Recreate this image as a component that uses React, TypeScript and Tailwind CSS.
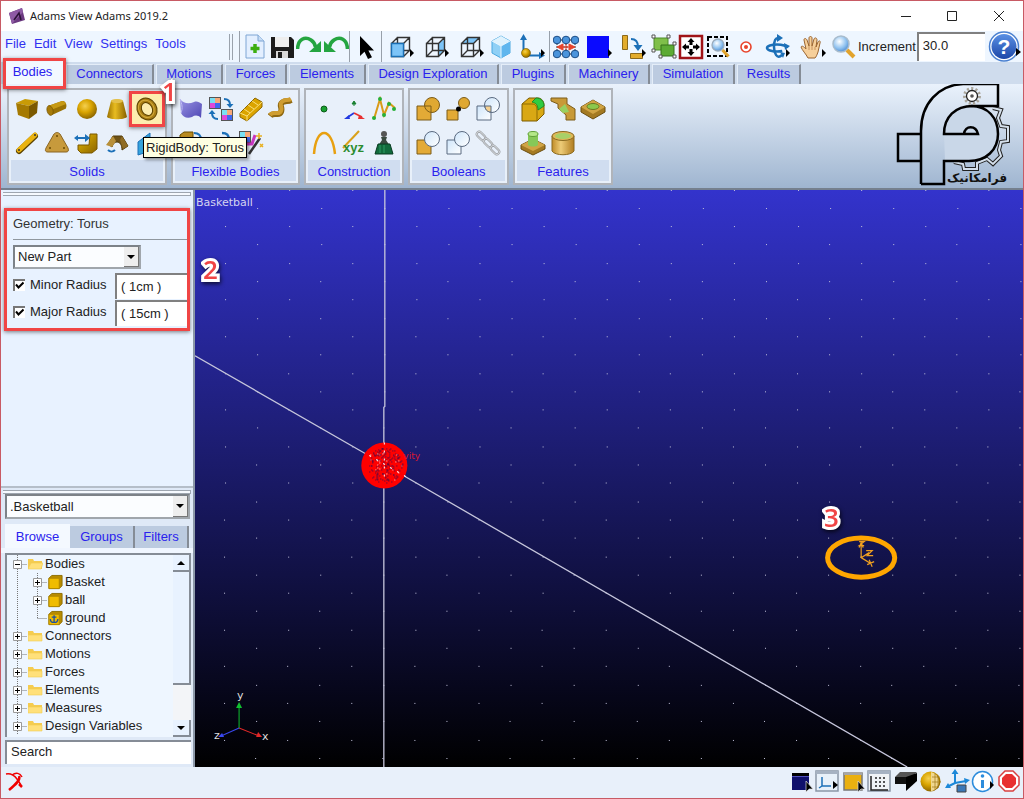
import React from "react";
import type { ReactNode } from "react";

type IconProps = { children: ReactNode; size?: number };

function Icon({ children, size = 26 }: IconProps) {
  return (
    <svg width={size} height={size} viewBox="0 0 26 26" fill="none" aria-hidden="true" className="shrink-0">
      {children}
    </svg>
  );
}

function Gradients() {
  return (
    <svg width="0" height="0" className="absolute" aria-hidden="true">
      <defs>
        <linearGradient id="gold" x1="0" y1="0" x2="1" y2="1">
          <stop offset="0" stopColor="#e6b800" />
          <stop offset="1" stopColor="#8a6400" />
        </linearGradient>
        <linearGradient id="goldH" x1="0" y1="0" x2="1" y2="0">
          <stop offset="0" stopColor="#9a7000" />
          <stop offset="0.4" stopColor="#e8bc20" />
          <stop offset="1" stopColor="#8a6200" />
        </linearGradient>
        <radialGradient id="goldBall" cx="0.4" cy="0.35" r="0.65">
          <stop offset="0" stopColor="#f5d050" />
          <stop offset="0.5" stopColor="#d9a400" />
          <stop offset="1" stopColor="#8f6800" />
        </radialGradient>
        <linearGradient id="tan" x1="0" y1="0" x2="1" y2="0">
          <stop offset="0" stopColor="#c08c28" />
          <stop offset="0.4" stopColor="#edcc78" />
          <stop offset="1" stopColor="#b07c20" />
        </linearGradient>
        <linearGradient id="purple" x1="0" y1="0" x2="1" y2="1">
          <stop offset="0" stopColor="#9a94e4" />
          <stop offset="1" stopColor="#5048b4" />
        </linearGradient>
        <linearGradient id="glass" x1="0" y1="0" x2="1" y2="1">
          <stop offset="0" stopColor="#cfe6fb" />
          <stop offset="1" stopColor="#ffffff" />
        </linearGradient>
        <linearGradient id="help" x1="0" y1="0" x2="0" y2="1">
          <stop offset="0" stopColor="#5a90e4" />
          <stop offset="1" stopColor="#1c47a8" />
        </linearGradient>
        <radialGradient id="lens" cx="0.4" cy="0.35" r="0.7">
          <stop offset="0" stopColor="#ffffff" />
          <stop offset="0.6" stopColor="#8fc2f0" />
          <stop offset="1" stopColor="#4a86cc" />
        </radialGradient>
      </defs>
    </svg>
  );
}

const corner = <path d="M22 15l4 4-4 4z" fill="#000" />;

const wireCube = (
  <g stroke="#333" strokeWidth="1.4">
    <path d="M3.500 9.500h12v13h-12zM9.500 3.500h12v13h-12zM3.500 9.500l6-6M15.500 9.500l6-6M15.500 22.500l6-6M3.500 22.500l6-6" />
  </g>
);

const newIcon = (
  <Icon>
    <path d="M4 1h12l6 6v17H4z" fill="#e3efff" stroke="#7fa6d4" />
    <path d="M16 1v6h6" fill="#c6dcf5" stroke="#7fa6d4" />
    <path d="M13 10v9M8.500 14.500h9" stroke="#3cae10" strokeWidth="3.500" />
  </Icon>
);
const saveIcon = (
  <Icon>
    <path d="M2 3h20l3 3v18H2z" fill="#1c1c1c" />
    <path d="M6 3h14v10H6z" fill="#eee" />
    <path d="M7 17h12v7H7z" fill="#d8d8d8" />
    <path d="M9 18h4v6H9z" fill="#1c1c1c" />
  </Icon>
);
const redoIcon = (
  <Icon>
    <path d="M1.500 15C2 5 9 2 15 6c3 2 4 4 4.500 7" stroke="#24a541" strokeWidth="3.600" />
    <path d="M25 7v11H13z" fill="#24a541" />
  </Icon>
);
const undoIcon = (
  <Icon>
    <path d="M24.500 15C24 5 17 2 11 6c-3 2-4 4-4.500 7" stroke="#24a541" strokeWidth="3.600" />
    <path d="M1 7v11h12z" fill="#24a541" />
  </Icon>
);
const pointerIcon = (
  <Icon>
    <path d="M7 2v20l4.500-4.200L15 25l4-1.800-3.600-6.700H21z" fill="#000" />
  </Icon>
);
const frontIcon = (
  <Icon>
    {wireCube}
    <path d="M3.500 9.500h12v13h-12z" fill="#7cc4f8" stroke="#1b6fb5" strokeWidth="1.400" />
    {corner}
  </Icon>
);
const rightIcon = (
  <Icon>
    <path d="M15.500 9.500l6-6v13l-6 6z" fill="#7cc4f8" stroke="#1b6fb5" />
    {wireCube}
    {corner}
  </Icon>
);
const topIcon = (
  <Icon>
    <path d="M3.500 9.500l6-6h12l-6 6z" fill="#7cc4f8" stroke="#1b6fb5" />
    {wireCube}
    {corner}
  </Icon>
);
const isoIcon = (
  <Icon>
    <path d="M13 2l9 5v12l-9 5-9-5V7z" fill="#8fd0f6" stroke="#4aa8e0" />
    <path d="M13 2l9 5-9 5-9-5z" fill="#dff2fd" />
    <path d="M13 12v12l9-5V7z" fill="#5fb6ee" />
    <path d="M4 7l9 5 9-5M13 12v12" stroke="#e8f6ff" />
  </Icon>
);
const axesIcon = (
  <Icon>
    <path d="M4.500 20V4M8 21.500h13" stroke="#1c70b8" strokeWidth="2" />
    <path d="M4.500 0L8 6H1zM20 18l6 3.500-6 3.500z" fill="#1c70b8" />
    <circle cx="7" cy="19" r="4.500" fill="url(#goldBall)" stroke="#6d5000" strokeWidth=".6" />
    {corner}
  </Icon>
);
const gridIcon = (
  <Icon>
    <path d="M4 6h18M4 20h18M4 6v14M22 6v14M13 6v14M4 13h18" stroke="#333" strokeDasharray="2 1" />
    <path d="M13 9v8M9 13h8M4 13l6-3v6zM22 13l-6-3v6z" fill="#e8442c" stroke="#e8442c" />
    {[4, 13, 22].map((x) => [6, 20].map((y) => <circle key={`${x}-${y}`} cx={x} cy={y} r="3.800" fill="#4a94dc" stroke="#1b4d86" />))}
  </Icon>
);
const blueIcon = (
  <Icon>
    <path d="M1 2h22v22H1z" fill="#0a0aff" />
    {corner}
  </Icon>
);
const rotateIcon = (
  <Icon>
    <path d="M2.500 1.500h5v14h-5zM10.500 19.500h12v5h-12z" fill="#e3ac2c" stroke="#8c691a" />
    <path d="M11 5c5 0 7 3 7 8" stroke="#1c70b8" strokeWidth="2" />
    <path d="M13.500 11h9L18 17z" fill="#1c70b8" />
    {corner}
  </Icon>
);
const groupIcon = (
  <Icon>
    <path d="M3 4h14v12H3z" fill="#7fbf4a" stroke="#4c8c28" />
    <path d="M10 11h13v11H10z" fill="#5cab35" stroke="#35721b" />
    {[[1, 1], [16, 1], [1, 15], [22, 8], [8, 21], [22, 21]].map(([x, y]) => (
      <path key={`${x}-${y}`} d={`M${x} ${y}h3v3h-3z`} fill="#fff" stroke="#555" />
    ))}
  </Icon>
);
const fitIcon = (
  <Icon>
    <path d="M2 2h22v22H2z" fill="#fff" stroke="#a01418" strokeWidth="2.500" />
    <path d="M13 4l3.500 4h-2v3h-3V8h-2zM13 22l3.500-4h-2v-3h-3v3h-2zM4 13l4-3.500v2h3v3H8v2zM22 13l-4-3.500v2h-3v3h3v2z" fill="#000" />
  </Icon>
);
const zoomBoxIcon = (
  <Icon>
    <path d="M3 3h19v19H3z" stroke="#000" strokeWidth="2" strokeDasharray="4 2" />
    <circle cx="13" cy="11" r="6" fill="url(#lens)" stroke="#9aabbc" strokeWidth="1.300" />
    <path d="M17.500 16l6 6.500" stroke="#e2a32c" strokeWidth="3.200" />
  </Icon>
);
const targetIcon = (
  <Icon>
    <circle cx="13" cy="13" r="5" stroke="#e8442c" strokeWidth="1.600" fill="#fff" />
    <circle cx="13" cy="13" r="2" fill="#e8442c" />
  </Icon>
);
const orbitIcon = (
  <Icon>
    <ellipse cx="13" cy="14" rx="10" ry="3.500" stroke="#1c70b8" strokeWidth="2.500" strokeDasharray="44 8" strokeDashoffset="-6" />
    <path d="M18 21c-5 5-8-2-8-8 0-5 1-9 4-9" stroke="#1c70b8" strokeWidth="2.500" />
    <path d="M13 0l6 4-6 4zM20 9l6 3-5 4zM16 18l5 1-2 5z" fill="#1c70b8" />
    {corner}
  </Icon>
);
const handIcon = (
  <Icon>
    <path
      d="M8 24c-2-4-6-8-7-11 1-2 3 0 5 2L4 6c0-2 2-2 3 0l2 6V4c0-2 3-2 3 0v8l2-7c1-2 3-1 3 1l-1 7 2-5c1-2 3-1 2 1l-2 9c-1 3-2 5-3 6z"
      fill="#f6cf9a"
      stroke="#9a6430"
    />
    <path d="M9 12v4M12 12v4M15 13v3" stroke="#c89460" />
    {corner}
  </Icon>
);
const magnifierIcon = (
  <Icon>
    <circle cx="10" cy="10" r="8" fill="url(#lens)" stroke="#a8bccd" strokeWidth="1.500" />
    <path d="M16 16l7 7" stroke="#e2a32c" strokeWidth="4" />
  </Icon>
);

/* Solids */
const boxIcon = (
  <Icon>
    <path d="M2 7l9-4 13 2-9 5z" fill="#c99b06" />
    <path d="M2 7l13 3v13L4 19z" fill="#a57a02" />
    <path d="M15 10l9-5-1 12-8 6z" fill="#7b5900" />
  </Icon>
);
const cylinderIcon = (
  <Icon>
    <path d="M4 10l14-5c4-1 6 6 3 8L8 19z" fill="#9a7204" />
    <path d="M4 10l14-5c2 0 3 1 4 3L7 14z" fill="#c79a14" />
    <ellipse cx="6" cy="14.500" rx="3" ry="5" fill="#a77b08" stroke="#705000" strokeWidth=".6" transform="rotate(-15 6 14.500)" />
  </Icon>
);
const sphereIcon = (
  <Icon>
    <circle cx="13" cy="13" r="10" fill="url(#goldBall)" />
  </Icon>
);
const frustumIcon = (
  <Icon>
    <path d="M7 5c2-2 10-2 12 0l4 16c-3 3-17 3-20 0z" fill="url(#goldH)" />
    <ellipse cx="13" cy="5" rx="6" ry="2" fill="#e4c04a" />
  </Icon>
);
const torusIcon = (
  <Icon>
    <g transform="rotate(-30 13 13)">
      <ellipse cx="13" cy="13" rx="7.500" ry="9" stroke="#5c4200" strokeWidth="5.500" />
      <ellipse cx="13" cy="13" rx="7.500" ry="9" stroke="#a87d14" strokeWidth="3.500" />
      <ellipse cx="12.500" cy="12.500" rx="7.500" ry="9" stroke="#d4ab3b" strokeWidth="1" />
    </g>
  </Icon>
);
const linkIcon = (
  <Icon>
    <path d="M5 21L21 6" stroke="#5c4300" strokeWidth="6" strokeLinecap="round" />
    <path d="M5 20L21 5" stroke="#eab310" strokeWidth="5" strokeLinecap="round" />
    <circle cx="5" cy="20" r="1" fill="#333" />
    <circle cx="21" cy="5" r="1" fill="#333" />
  </Icon>
);
const plateIcon = (
  <Icon>
    <path d="M10 4c2-2 4-2 6 0l8 14c1 3 0 4-2 4H4c-3 0-3-2-2-4z" fill="#c79a3c" stroke="#8a6420" />
    <circle cx="13" cy="6" r="1" fill="#6b4a00" />
    <circle cx="6" cy="18" r="1" fill="#6b4a00" />
    <circle cx="20" cy="18" r="1" fill="#6b4a00" />
  </Icon>
);
const extrudeIcon = (
  <Icon>
    <path d="M16 4h7v15l-5 4H7l-3-3v-5h11z" fill="url(#gold)" stroke="#7b5900" />
    <path d="M3 8h9" stroke="#1c70b8" strokeWidth="2" />
    <path d="M11 4l5 4-5 4zM4 5l-4 3 4 3z" fill="#1c70b8" />
  </Icon>
);
const revolveIcon = (
  <Icon>
    <path d="M4 14l5-8h9l6 10-6 4c0-5-2-8-5-8s-4 2-5 5z" fill="#6e5216" stroke="#503b0a" />
    <path d="M2 15l7-9 3 5-4 6z" fill="#b8903a" />
    <path d="M18 6l6 10-5 3-3-9z" fill="#8f6c24" />
    <path d="M4 20c2 2 5 2 7 0" stroke="#1c70b8" strokeWidth="2" />
  </Icon>
);
const planeIcon = (
  <Icon>
    <path d="M4 12L16 3v18L4 25z" fill="#35a3dc" stroke="#1c70b8" />
  </Icon>
);

/* Flexible bodies */
const flexIcon = (
  <Icon>
    <path d="M2 3c4 5 9 5 14 3 3-1 5 0 8 2l-1 14c-3-3-6-3-9-1-5 2-9 0-11-4z" fill="url(#purple)" />
    <path d="M2 3c2 5 3 9 1 14" stroke="#c0bcf4" />
  </Icon>
);
const mosaic = (x: number, y: number) => (
  <g>
    <path d={`M${x} ${y}h12v12h-12z`} fill="#555" />
    <path d={`M${x + 1} ${y + 1}h5v5h-5z`} fill="#78e0f4" />
    <path d={`M${x + 6} ${y + 1}h5v5h-5z`} fill="#f8a878" />
    <path d={`M${x + 1} ${y + 6}h5v5h-5z`} fill="#e048d8" />
    <path d={`M${x + 6} ${y + 6}h5v5h-5z`} fill="#4068f0" />
  </g>
);
const swapIcon = (
  <Icon>
    {mosaic(1, 1)}
    {mosaic(13, 13)}
    <path d="M16 3c4 0 6 2 6 6M10 23c-4 0-6-2-6-6" stroke="#1c70b8" strokeWidth="2" />
    <path d="M18.500 8h7L22 12zM.500 18h7L4 14z" fill="#1c70b8" />
  </Icon>
);
const beamIcon = (
  <Icon>
    <path d="M2 17L17 2l7 4v5L9 25l-7-4z" fill="#dba400" stroke="#8f6800" />
    <path d="M2 17l7 3L24 6M9 20v5M6 13l6 4M10 9l6 4M14 5l6 4" stroke="#fadf7a" />
  </Icon>
);
const bendIcon = (
  <Icon>
    <path d="M2 20c4-5 9 1 11-4s-3-7 2-10c3-2 5 0 8-2" stroke="#8f6810" strokeWidth="6" />
    <path d="M2 19c4-5 9 1 11-4s-3-7 2-10c3-2 5 0 8-2" stroke="#cf9d30" strokeWidth="4" />
  </Icon>
);
const rigidSwapIcon = (
  <Icon>
    <path d="M2 5l4-3h9v9l-3 3H2z" fill="#b88a20" stroke="#6b4e00" />
    <path d="M16 3c5 0 7 2 7 7" stroke="#1c70b8" strokeWidth="2" />
    <path d="M19 9h7l-3 4z" fill="#1c70b8" />
  </Icon>
);
const curveArrowIcon = (
  <Icon>
    <path d="M14 3c5 0 7 2 7 7" stroke="#1c70b8" strokeWidth="2.500" />
    <path d="M17 8h8l-4 5z" fill="#1c70b8" />
  </Icon>
);
const wandIcon = (
  <Icon>
    {mosaic(1, 1)}
    <path d="M3 14h11l3-9" stroke="#c838c0" strokeWidth="3" />
    <path d="M11 24L22 8" stroke="#333" strokeWidth="2.500" />
    <path d="M21 3v6M18 6h6M22 14l3 3M22 17l3-3" stroke="#e8b020" strokeWidth="1.500" />
  </Icon>
);

/* Construction */
const pointIcon = (
  <Icon>
    <circle cx="13" cy="13" r="3" fill="#18a030" stroke="#0b5c18" />
  </Icon>
);
const markerIcon = (
  <Icon>
    <path d="M13 17l-6 4" stroke="#2038e0" strokeWidth="1.600" />
    <path d="M13 17l8 4" stroke="#e83030" strokeWidth="1.600" />
    <path d="M3 23l5-4 1 4z" fill="#2038e0" />
    <path d="M24 23l-6-4-1 4z" fill="#e83030" />
    <path d="M13 5l2 3h-4zM13 8v2" fill="#188030" stroke="#188030" />
  </Icon>
);
const polylineIcon = (
  <Icon>
    <path d="M3 23L9 3l4 16 5-12 6 5" stroke="#d99a18" strokeWidth="2" />
    {[[3, 22], [9, 3], [13, 19], [18, 8], [23, 13]].map(([x, y]) => (
      <circle key={`${x}-${y}`} cx={x} cy={y} r="2" fill="#28b038" />
    ))}
  </Icon>
);
const arcIcon = (
  <Icon>
    <path d="M3 24C5-4 21-4 24 24" stroke="#e8a010" strokeWidth="2.500" />
  </Icon>
);
const xyzIcon = (
  <Icon>
    <path d="M2 18L18 1" stroke="#d9a018" strokeWidth="2" />
    <text x="2" y="22" fontSize="13" fontWeight="700" fill="#2c8c30" className="font-['Liberation_Sans',sans-serif]">
      xyz
    </text>
  </Icon>
);
const massIcon = (
  <Icon>
    <circle cx="13" cy="4" r="3" fill="#555" />
    <path d="M10 7h6l-1 3 4 6H7l4-6z" fill="#3a4a40" />
    <path d="M7 14h12l3 10H4z" fill="#116b3c" stroke="#0a3c22" />
    <path d="M9 15v8M13 15v8" stroke="#2f9c62" />
  </Icon>
);

/* Booleans */
const unionIcon = (
  <Icon>
    <path d="M2 10h14v14H2z" fill="#e3aa36" stroke="#7c5c18" />
    <circle cx="17" cy="9" r="7.500" fill="#dfa832" stroke="#7c5c18" />
    <path d="M10 10h6v6" stroke="#7c5c18" />
  </Icon>
);
const mergeIcon = (
  <Icon>
    <path d="M2 14h11v10H2z" fill="#e3aa36" stroke="#7c5c18" />
    <circle cx="19" cy="7" r="5.500" fill="#dfa832" stroke="#7c5c18" />
    <circle cx="13.500" cy="13" r="2.500" fill="#000" />
  </Icon>
);
const intersectIcon = (
  <Icon>
    <path d="M2 10h14v14H2z" fill="url(#glass)" stroke="#5a6a80" />
    <circle cx="17" cy="9" r="7.500" fill="url(#glass)" stroke="#5a6a80" />
    <path d="M10 10h6v6c-4 0-6-3-6-6z" fill="#f4d090" stroke="#5a6a80" />
  </Icon>
);
const cutIcon = (
  <Icon>
    <path d="M2 10h14v14H2z" fill="#e3aa36" stroke="#7c5c18" />
    <circle cx="17" cy="9" r="7.500" fill="url(#glass)" stroke="#5a6a80" />
  </Icon>
);
const splitIcon = (
  <Icon>
    <path d="M2 10h14v14H2z" fill="url(#glass)" stroke="#5a6a80" />
    <circle cx="17" cy="9" r="7.500" fill="url(#glass)" stroke="#5a6a80" />
  </Icon>
);
const chainIcon = (
  <Icon>
    {[[6, 6], [13, 13], [20, 20]].map(([x, y]) => (
      <g key={x} transform={`rotate(45 ${x} ${y})`}>
        <rect x={x - 5} y={y - 2.5} width="10" height="5" rx="2.500" stroke="#8e9296" strokeWidth="2" />
        <rect x={x - 5} y={y - 2.5} width="10" height="5" rx="2.500" stroke="#d4d7da" strokeWidth="1" />
      </g>
    ))}
  </Icon>
);

/* Features */
const filletIcon = (
  <Icon>
    <path d="M2 8l7-6h9c4 0 6 4 6 7v9l-7 7H2z" fill="#d9a814" stroke="#7c5c00" />
    <path d="M2 8h10c4 0 5 3 5 6v11" stroke="#8f6c00" />
    <path d="M12 6l4-4c5 0 8 3 8 8l-6 4c0-5-2-7-6-8z" fill="#30cc40" stroke="#1c8c28" />
  </Icon>
);
const chamferIcon = (
  <Icon>
    <path d="M1 2h16v6l8 5v11h-9v-5l-8-7V8L1 5z" fill="#c89a38" stroke="#7c5c18" />
    <path d="M9 13l6-5 4 8-6 1z" fill="#98d060" />
  </Icon>
);
const holeIcon = (
  <Icon>
    <path d="M1 11l12-7 12 7v5l-12 7-12-7z" fill="#a47a22" stroke="#6b4e10" />
    <path d="M1 11l12-7 12 7-12 7z" fill="#d0a444" />
    <ellipse cx="13" cy="10.500" rx="6" ry="3" fill="#8cc84c" stroke="#6b7c20" />
  </Icon>
);
const bossIcon = (
  <Icon>
    <path d="M1 15l12-6 12 6v4l-12 6-12-6z" fill="#a47a22" stroke="#6b4e10" />
    <path d="M1 15l12-6 12 6-12 6z" fill="#d0a444" />
    <path d="M8 4h10v11c-2 2-8 2-10 0z" fill="#86c858" />
    <ellipse cx="13" cy="4" rx="5" ry="2.500" fill="#b4e888" stroke="#60a038" />
  </Icon>
);
const hollowIcon = (
  <Icon>
    <path d="M2 6v15c3 5 19 5 22 0V6z" fill="url(#tan)" stroke="#8a6a20" />
    <ellipse cx="13" cy="6" rx="11" ry="4.500" fill="#e0b858" stroke="#8a6a20" />
    <ellipse cx="13" cy="6" rx="8" ry="3" fill="#a8d068" />
  </Icon>
);

type Tool = { label: string; cell: string; icon: ReactNode };

const fileTools: Tool[] = [
  { label: "New", cell: "w-[27px]", icon: newIcon },
  { label: "Save", cell: "w-[27px]", icon: saveIcon },
  { label: "Undo", cell: "w-[27px]", icon: redoIcon },
  { label: "Redo", cell: "w-[27px]", icon: undoIcon },
];
const selectTools: Tool[] = [{ label: "Select", cell: "w-[30px]", icon: pointerIcon }];
const viewTools: Tool[] = [
  { label: "Front view", cell: "w-[35px]", icon: frontIcon },
  { label: "Right view", cell: "w-[35px]", icon: rightIcon },
  { label: "Top view", cell: "w-[35px]", icon: topIcon },
  { label: "Isometric view", cell: "w-[26px]", icon: isoIcon },
  { label: "Orient view", cell: "w-[35px]", icon: axesIcon },
];
const displayTools: Tool[] = [
  { label: "Working grid", cell: "w-[30px]", icon: gridIcon },
  { label: "Color", cell: "w-[35px]", icon: blueIcon },
  { label: "Rotate object", cell: "w-[34px]", icon: rotateIcon },
  { label: "Group", cell: "w-[28px]", icon: groupIcon },
  { label: "Fit view", cell: "w-[26px]", icon: fitIcon },
  { label: "Zoom box", cell: "w-[28px]", icon: zoomBoxIcon },
  { label: "Center view", cell: "w-[27px]", icon: targetIcon },
  { label: "Rotate view", cell: "w-[35px]", icon: orbitIcon },
  { label: "Pan", cell: "w-[38px]", icon: handIcon },
  { label: "Zoom", cell: "w-[24px]", icon: magnifierIcon },
];

function ToolGroup({ tools }: { tools: Tool[] }) {
  return (
    <div className="flex h-full items-center border-l border-[#98a0aa] pl-px">
      {tools.map((t) => (
        <button key={t.label} type="button" aria-label={t.label} className={`flex h-full items-center justify-center ${t.cell}`}>
          {t.icon}
        </button>
      ))}
    </div>
  );
}

const tabs = [
  { name: "Connectors", cell: "w-[88px]" },
  { name: "Motions", cell: "w-[67px]" },
  { name: "Forces", cell: "w-[62px]" },
  { name: "Elements", cell: "w-[77px]" },
  { name: "Design Exploration", cell: "w-[131px]" },
  { name: "Plugins", cell: "w-[65px]" },
  { name: "Machinery", cell: "w-[82px]" },
  { name: "Simulation", cell: "w-[83px]" },
  { name: "Results", cell: "w-[64px]" },
];

type GroupDef = { name: string; width: string; rows: [string, ReactNode][][] };

const groups: GroupDef[] = [
  {
    name: "Solids",
    width: "w-[160px]",
    rows: [
      [["Box", boxIcon], ["Cylinder", cylinderIcon], ["Sphere", sphereIcon], ["Frustum", frustumIcon], ["Torus", torusIcon]],
      [["Link", linkIcon], ["Plate", plateIcon], ["Extrusion", extrudeIcon], ["Revolution", revolveIcon], ["Plane", planeIcon]],
    ],
  },
  {
    name: "Flexible Bodies",
    width: "w-[129px]",
    rows: [
      [["Flexible body", flexIcon], ["Flex to flex", swapIcon], ["Discrete link", beamIcon], ["FE part", bendIcon]],
      [["Rigid to flex", rigidSwapIcon], ["Flex swap", curveArrowIcon], ["ViewFlex", wandIcon]],
    ],
  },
  {
    name: "Construction",
    width: "w-[100px]",
    rows: [
      [["Point", pointIcon], ["Marker", markerIcon], ["Polyline", polylineIcon]],
      [["Arc", arcIcon], ["Spline", xyzIcon], ["Point mass", massIcon]],
    ],
  },
  {
    name: "Booleans",
    width: "w-[101px]",
    rows: [
      [["Unite", unionIcon], ["Merge", mergeIcon], ["Intersect", intersectIcon]],
      [["Cut", cutIcon], ["Split", splitIcon], ["Chain", chainIcon]],
    ],
  },
  {
    name: "Features",
    width: "w-[100px]",
    rows: [
      [["Fillet", filletIcon], ["Chamfer", chamferIcon], ["Hole", holeIcon]],
      [["Boss", bossIcon], ["Hollow", hollowIcon]],
    ],
  },
];

function Callout({ children, place }: { children: string; place: string }) {
  return (
    <span
      className={`absolute z-30 font-['Open_Sans',sans-serif] text-[26px] leading-6 font-semibold text-[#f04545] [-webkit-text-stroke:6px_white] [paint-order:stroke_fill] drop-shadow-[1px_2px_2px_rgba(0,0,0,0.7)] ${place}`}
    >
      {children}
    </span>
  );
}

function TitleBar() {
  return (
    <header className="flex h-[30px] shrink-0 items-center bg-white pl-2">
      <svg width="16" height="16" viewBox="0 0 16 16" aria-hidden="true">
        <path d="M0 5L13 0l3 12-13 4z" fill="#6b3a80" />
        <path d="M0 5L13 0l1 4L3 16z" fill="#8e5aa4" />
        <path d="M5 12l5-7 2 7" fill="none" stroke="#2c1238" strokeWidth="1.600" />
      </svg>
      <h1 className="ml-[5px] font-['Noto_Sans',sans-serif] text-[11px] text-[#222]">Adams View Adams 2019.2</h1>
      <div className="ml-auto flex h-full">
        <button type="button" aria-label="Minimize" className="flex w-[46px] items-center justify-center">
          <svg width="10" height="10" stroke="#222"><path d="M0 5.500h10" /></svg>
        </button>
        <button type="button" aria-label="Maximize" className="flex w-[46px] items-center justify-center">
          <svg width="10" height="10" stroke="#222" fill="none"><path d="M.500.500h9v9h-9z" /></svg>
        </button>
        <button type="button" aria-label="Close" className="flex w-[48px] items-center justify-center">
          <svg width="10" height="10" stroke="#222"><path d="M0 0l10 10M10 0L0 10" /></svg>
        </button>
      </div>
    </header>
  );
}

function Toolbar() {
  return (
    <div className="flex h-[31px] shrink-0 items-center bg-[#eef6ff]">
      <nav className="flex w-[228px] shrink-0 items-center gap-[8px] pb-[6px] pl-[4px] text-[#3030f0]">
        {["File", "Edit", "View", "Settings", "Tools"].map((m) => (
          <button key={m} type="button">{m}</button>
        ))}
      </nav>
      <div className="mr-[6px] h-[26px] w-[4px] shrink-0 border-x border-[#9aa2ac]" />
      <ToolGroup tools={fileTools} />
      <ToolGroup tools={selectTools} />
      <ToolGroup tools={viewTools} />
      <ToolGroup tools={displayTools} />
      <label htmlFor="increment" className="ml-[2px] text-[#222]">Increment</label>
      <input
        id="increment"
        defaultValue="30.0"
        className="ml-px h-[29px] w-[68px] border-t-2 border-l-2 border-[#808080] bg-white px-1 pb-1 text-[#222] outline-none"
      />
      <button type="button" aria-label="Help" className="ml-[3px] flex items-center justify-center">
        <svg width="33" height="31" viewBox="0 0 33 31" aria-hidden="true">
          <circle cx="16" cy="15.500" r="14.500" fill="#fff" stroke="#4a80d0" strokeWidth="1.500" />
          <circle cx="16" cy="15.500" r="12.500" fill="url(#help)" />
          <text x="16" y="23" textAnchor="middle" fontSize="21" fontWeight="700" fill="#fff">?</text>
          <path d="M28 17l5 4-5 4z" />
        </svg>
      </button>
    </div>
  );
}

function TabBar() {
  return (
    <div className="relative z-20 flex h-[22px] shrink-0 items-end gap-[2px] bg-[#cfdced] pl-[4px] text-[#2a22ee]" role="tablist">
      <button type="button" role="tab" aria-selected="true" className="h-full w-[59px] bg-[#f2f8ff] pr-[4px] pb-[2px]">
        Bodies
      </button>
      {tabs.map((t) => (
        <button
          key={t.name}
          type="button"
          role="tab"
          className={`h-[20px] border-t border-r-2 border-l border-t-[#e4edf8] border-r-[#858c96] border-l-[#e4edf8] bg-[#bccbe0] pb-[2px] ${t.cell}`}
        >
          {t.name}
        </button>
      ))}
      <div className="pointer-events-none absolute -top-[4px] left-[2px] h-[31px] w-[63px] border-[3px] border-[#f04545] shadow-[0_1px_4px_rgba(0,0,0,0.5)]" />
    </div>
  );
}

function Logo() {
  return (
    <svg width="115" height="104" viewBox="895 82 115 104" fill="none" role="img" aria-label="Logo" className="-mt-[5px] mr-[12px] ml-auto shrink-0">
      <g strokeLinejoin="miter">
        <path d="M992 107l8 2-3 8 3 8 7 1v14l-7 1-2 8 2 6-8 8-6-5-10 4v6h-13l-1-5-9-2" stroke="#222" strokeWidth="4" />
        <path d="M992 107l8 2-3 8 3 8 7 1v14l-7 1-2 8 2 6-8 8-6-5-10 4v6h-13l-1-5-9-2" stroke="#d5e0ec" strokeWidth="2" />
      </g>
      <path
        d="M968 105c17 0 29 12 29 28s-12 27-29 27h-24l-1-27c0-16 10-28 25-28z"
        fill="#c9d7e8"
      />
      <path
        d="M920 183V130C920 102 938 84 962 83h35v22h-25c-18 0-29 11-29 28h34c-2-9-13-9-14 0M970 105c17 0 27 12 27 28s-12 27-29 27h-25v23h-23M920 133h-23v27h23"
        stroke="#000"
        strokeWidth="2.500"
      />
      <circle cx="971" cy="95" r="7" stroke="#aaa59a" strokeWidth="4" strokeDasharray="2 2" />
      <circle cx="971" cy="95" r="5.500" fill="#fff" stroke="#222" strokeWidth="1.300" />
      <circle cx="971" cy="95" r="1.800" fill="#555" />
      <text x="976" y="181" textAnchor="middle" fontSize="12" fontWeight="700" fill="#111" className="font-['DejaVu_Sans',sans-serif]">
        فرامکانیک
      </text>
    </svg>
  );
}

function Ribbon() {
  return (
    <div className="relative flex h-[106px] shrink-0 items-start gap-[4px] border-b-2 border-[#75808e] bg-linear-to-b/srgb from-[#eaf2fc] to-[#9fb5d0] pt-[4px] pl-[6px]">
      {groups.map((g) => (
        <section key={g.name} className={`flex h-[97px] shrink-0 flex-col border-2 border-[#b0b4ba] bg-[#e8f0fa] p-[2px] ${g.width}`}>
          {g.rows.map((row, r) => (
            <div key={r} className="flex h-[34px] pl-px">
              {row.map(([label, icon]) => (
                <button
                  key={label}
                  type="button"
                  aria-label={label}
                  className={`relative flex w-[30px] items-center justify-center ${label === "Torus" ? "bg-[#fdedaf]" : ""}`}
                >
                  {icon}
                  {label === "Torus" && (
                    <span className="pointer-events-none absolute -inset-x-[3px] -inset-y-[1px] border-[3px] border-[#f04545] shadow-[0_1px_4px_rgba(0,0,0,0.5)]" />
                  )}
                </button>
              ))}
            </div>
          ))}
          <h2 className="mt-auto bg-[#d0ddf0] pt-[2px] text-center leading-[19px] text-[#2a22ee]">{g.name}</h2>
        </section>
      ))}
      <Logo />
      <Callout place="left-[161px] -top-[5px]">1</Callout>
      <div
        role="tooltip"
        className="absolute top-[53px] left-[142px] border border-black bg-[#ffffe1] px-[2px] leading-[19px] whitespace-nowrap text-[#222] shadow-[2px_2px_3px_rgba(0,0,0,0.4)]"
      >
        RigidBody: Torus
      </div>
    </div>
  );
}

function Arrow({ up = false }: { up?: boolean }) {
  return (
    <svg width="8" height="4" viewBox="0 0 8 4" aria-hidden="true">
      <path d={up ? "M0 4h8L4 0z" : "M0 0h8L4 4z"} />
    </svg>
  );
}

function DropDown({ label, value, className }: { label: string; value: string; className: string }) {
  return (
    <div className={`relative border-2 border-t-[#7c8288] border-r-[#a0a6ac] border-b-[#a0a6ac] border-l-[#7c8288] bg-[#fbfdff] ${className}`}>
      <select aria-label={label} defaultValue={value} className="h-full w-full appearance-none bg-transparent pl-[3px] text-[#222] outline-none">
        <option>{value}</option>
      </select>
      <span className="pointer-events-none absolute inset-y-0 right-0 flex w-[15px] items-center justify-center border-r border-b border-[#777] bg-[#eee]">
        <Arrow />
      </span>
    </div>
  );
}

function RadiusRow({ id, label, value }: { id: string; label: string; value: string }) {
  return (
    <div className="flex h-[27px] items-center">
      <span className="relative mb-[2px] h-[12px] w-[12px]">
        <input
          id={id}
          type="checkbox"
          defaultChecked
          className="block h-[12px] w-[12px] appearance-none border-t-2 border-l-2 border-[#777] bg-white"
        />
        <svg className="pointer-events-none absolute top-[2px] left-[2px]" width="9" height="9" viewBox="0 0 9 9" fill="none" stroke="#000" strokeWidth="2" aria-hidden="true">
          <path d="M1 3.500l2.500 3L8.500 1.500" />
        </svg>
      </span>
      <label htmlFor={id} className="mb-px ml-[5px] w-[85px] text-[#222]">{label}</label>
      <input
        aria-label={`${label} value`}
        defaultValue={value}
        className="h-[26px] min-w-0 flex-1 border-t-2 border-l-2 border-[#808080] bg-white pl-[4px] text-[#222] outline-none"
      />
    </div>
  );
}

function Handle() {
  return <div className="mr-[2px] ml-[2px] h-[4px] border-y border-r border-[#9ea6b0] bg-[#f6faff]" />;
}

function Folder({ open = false }: { open?: boolean }) {
  return (
    <svg width="15" height="12" viewBox="0 0 15 12" className="shrink-0" aria-hidden="true">
      <path d="M0 11V1h5l1 2h8v8z" fill="#f5cc50" />
      <path d={open ? "M0 11l3-6h12l-2 6z" : "M0 11V5h14v6z"} fill="#ffe07a" stroke="#f0cc50" strokeWidth=".6" />
    </svg>
  );
}

function Cube({ anchor = false }: { anchor?: boolean }) {
  return (
    <svg width="15" height="16" viewBox="0 0 16 16" className="shrink-0" aria-hidden="true">
      <path d="M1 4l3-3h11v11l-3 3H1z" fill="#b88c00" stroke="#8c6c00" />
      <path d="M1 4h11v11H1z" fill="#f0bc00" stroke="#b08800" />
      {anchor && <path d="M6.500 5v8M4 7h5M2.500 9c0 5 8 5 8 0" fill="none" stroke="#1c50a0" strokeWidth="1.400" />}
    </svg>
  );
}

type Node = { name: string; level: number; kind: "open" | "folder" | "cube" | "ground" };
const nodes: Node[] = [
  { name: "Bodies", level: 0, kind: "open" },
  { name: "Basket", level: 1, kind: "cube" },
  { name: "ball", level: 1, kind: "cube" },
  { name: "ground", level: 1, kind: "ground" },
  { name: "Connectors", level: 0, kind: "folder" },
  { name: "Motions", level: 0, kind: "folder" },
  { name: "Forces", level: 0, kind: "folder" },
  { name: "Elements", level: 0, kind: "folder" },
  { name: "Measures", level: 0, kind: "folder" },
  { name: "Design Variables", level: 0, kind: "folder" },
];

function TreeLines({ node }: { node: Node }) {
  const x = node.level === 0 ? 9.5 : 29.5;
  const ground = node.kind === "ground";
  return (
    <svg width={node.level === 0 ? 20 : 40} height="18" fill="none" className="shrink-0" aria-hidden="true">
      <path d="M9.500 0v18" stroke="#777" strokeDasharray="1 1" />
      {node.level === 1 && <path d={ground ? "M29.500 0v9" : "M29.500 0v18"} stroke="#777" strokeDasharray="1 1" />}
      <path d={`M${x} 9.500h9`} stroke="#777" strokeDasharray="1 1" />
      {!ground && (
        <>
          <path d={`M${x - 4} 5.500h8v8h-8z`} fill="#fff" stroke="#999" />
          <path d={node.kind === "open" ? `M${x - 2.5} 9.500h5` : `M${x - 2.5} 9.500h5M${x} 7v5`} stroke="#000" />
        </>
      )}
    </svg>
  );
}

function Sidebar() {
  return (
    <aside className="flex w-[194px] shrink-0 flex-col border-r-2 border-[#8c98a8] bg-[#e8f2ff]">
      <div className="relative flex flex-1 flex-col pt-[2px]">
        <Handle />
        <div className="mx-[3px] mt-[12px] h-[123px] border-[3px] border-[#f04545] pt-[2px] pl-[6px] shadow-[0_1px_4px_rgba(0,0,0,0.5)]">
          <h2 className="leading-[22px] text-[#333]">Geometry: Torus</h2>
          <div className="mt-[4px] mb-[5px] border-t border-[#8f979f]" />
          <DropDown label="Geometry target" value="New Part" className="h-[24px] w-[128px]" />
          <div className="mt-[3px]">
            <RadiusRow id="minor" label="Minor Radius" value="( 1cm )" />
            <RadiusRow id="major" label="Major Radius" value="( 15cm )" />
          </div>
        </div>
      </div>
      <div className="flex h-[281px] flex-col border-t-2 border-[#b5bec9] bg-[#dfe9f7] pt-[2px]">
        <Handle />
        <DropDown label="Model" value=".Basketball" className="mr-[3px] ml-[4px] h-[25px]" />
        <div className="mt-[3px] mr-[4px] ml-[4px] flex h-[26px] items-end pt-[2px] text-[#2a22ee]" role="tablist">
          <button type="button" role="tab" aria-selected="true" className="h-full w-[65px] bg-[#f4f9ff] pt-px">Browse</button>
          <button type="button" role="tab" className="h-[22px] flex-1 border-r-2 border-[#858c96] bg-[#bccbe0]">Groups</button>
          <button type="button" role="tab" className="h-[22px] w-[54px] border-r-2 border-[#858c96] bg-[#bccbe0]">Filters</button>
        </div>
        <div className="h-[5px] bg-[#f0f6ff]" />
        <div className="mr-[2px] ml-[4px] flex min-h-0 flex-1 border-t-2 border-l-2 border-[#858c96] bg-[#eef6ff]">
          <ul className="flex-1 pl-[1px] text-[#222]">
            {nodes.map((n) => (
              <li key={n.name} className="flex h-[18px] items-center">
                <TreeLines node={n} />
                {n.kind === "cube" || n.kind === "ground" ? <Cube anchor={n.kind === "ground"} /> : <Folder open={n.kind === "open"} />}
                <span className="ml-[2px] whitespace-nowrap">{n.name}</span>
              </li>
            ))}
          </ul>
          <div className="flex w-[18px] flex-col bg-[#f3f5f8]">
            <button type="button" aria-label="Scroll up" className="flex h-[17px] items-center justify-center border-r-2 border-b-2 border-[#858c96] bg-[#e8f2ff]"><Arrow up /></button>
            <div className="h-[113px] border-r-2 border-b-2 border-[#858c96] bg-[#e8f2ff]" />
            <button type="button" aria-label="Scroll down" className="mt-auto flex h-[17px] items-center justify-center border-r-2 border-b-2 border-[#858c96] bg-[#e8f2ff]"><Arrow /></button>
          </div>
        </div>
        <input
          aria-label="Search"
          defaultValue="Search"
          className="mt-[3px] mr-[2px] mb-[3px] ml-[4px] h-[24px] border-t-2 border-l-2 border-[#858c96] bg-white pb-[3px] pl-[4px] text-[#222] outline-none"
        />
      </div>
    </aside>
  );
}

const gridDots: [number, number][] = [];
for (let c = -1; c < 27; c++) {
  for (let r = 0; r < 17; r++) {
    const even = Math.abs(c) % 2 === 0;
    gridDots.push([Math.round(226.5 + c * 31.74 - r * 0.12), Math.round((even ? 191.5 : 209.8) + r * 36.6)]);
  }
}

const speckles: [number, number][] = [];
let seed = 7;
const next = () => (seed = (seed * 16807) % 2147483647) / 2147483647;
for (let i = 0; i < 190; i++) {
  const a = next() * Math.PI * 2;
  const d = Math.sqrt(next()) * 18;
  speckles.push([Math.round(384 + Math.cos(a) * d), Math.round(466 + Math.sin(a) * d)]);
}

function Viewport() {
  return (
    <main className="relative min-w-0 flex-1 overflow-hidden bg-linear-to-b/srgb from-[#3333cc] to-black">
      <svg className="absolute inset-0 h-full w-full" viewBox="195 191 828 576" preserveAspectRatio="xMinYMin slice" fill="none">
        {gridDots.map(([x, y]) => (
          <rect key={`${x}-${y}`} x={x - 1} y={y - 1} width="1" height="1" fill="#c4c4dc" />
        ))}
        <path d="M384.500 191v216l-1 1v359M195 356.500L384 465l522 302" stroke="#c6c6dc" strokeWidth="1.300" />
        <text x="196" y="207" fontSize="11" fill="#d4d4f0" className="font-['DejaVu_Sans',sans-serif]">Basketball</text>
        <circle cx="384" cy="466" r="23" fill="#ff0000" />
        {speckles.map(([x, y], i) => (
          <rect key={i} x={x} y={y} width="1" height="1" fill={i % 9 === 0 ? "#ffd0d0" : "#3a0c50"} />
        ))}
        <path d="M384 443v34M369 456l38 22" stroke="#fff" strokeDasharray="2 6" />
        <text x="403" y="460" fontSize="9" fill="#d81830" className="font-['DejaVu_Sans',sans-serif]">vity</text>
        <ellipse cx="860" cy="558" rx="33.500" ry="19.500" stroke="#ffa600" strokeWidth="5" />
        <g stroke="#f0a020" strokeWidth="1.200">
          <path d="M860 558v-12M858 548l2-5 2 5M858 542h5l-5 4h5M860 558l8-5M865 551h6l-5 5h6M860 558l10 6M866 565l7-3M868 560l3 7" />
        </g>
        <path d="M239 728v-22" stroke="#10c030" />
        <path d="M239 702l3 6h-6z" fill="#10c030" />
        <path d="M239 728l20 8" stroke="#e02828" />
        <path d="M262 737l-6 0 2-5z" fill="#e02828" />
        <path d="M239 728l-18 8" stroke="#3a48f0" />
        <path d="M218 737l6 0-2-4z" fill="#3a48f0" />
        <g fontSize="11" fill="#ddd" className="font-['DejaVu_Sans',sans-serif]">
          <text x="237" y="699">y</text>
          <text x="262" y="740">x</text>
          <text x="214" y="739">z</text>
        </g>
      </svg>
      <Callout place="left-[8px] top-[67px]">2</Callout>
      <Callout place="left-[629px] top-[315px]">3</Callout>
    </main>
  );
}

const statusIcons: [string, ReactNode][] = [
  ["Background color", <Icon key="a"><path d="M4 4h17v17H4z" fill="#10106c" /><path d="M4 4h17v3H4z" fill="#000" /><path d="M4 7h17v1H4z" fill="#5050c0" /><path d="M18 12v11l3-3h4z" fill="#000" stroke="#ddd" strokeWidth=".7" /></Icon>],
  ["View triad", <Icon key="b"><path d="M2 2h22v20H2z" fill="#e8f1fa" stroke="#8a96a6" strokeWidth="1.500" /><path d="M2 2h22v3H2z" fill="#a6b2c2" /><path d="M8 8v9h9M8 17l-3 2" stroke="#1c70b8" strokeWidth="1.500" /><path d="M19 12l5 4-5 4z" fill="#000" /></Icon>],
  ["Window layout", <Icon key="c"><path d="M4 4h18v17H4z" fill="#eab010" stroke="#777" strokeWidth="1.500" /><path d="M4 3h18v3H4z" fill="#a6a6a6" /><path d="M18 12v11l3-3h4z" fill="#000" stroke="#ddd" strokeWidth=".7" /></Icon>],
  ["Grid visibility", <Icon key="d"><path d="M2 2h22v20H2z" fill="#f0f3f6" stroke="#8a96a6" strokeWidth="1.500" /><path d="M2 2h22v3H2z" fill="#a6b2c2" /><path d="M5 7v14h17" stroke="#222" strokeWidth="1.500" /><path d="M9 9h11M9 13h11M9 17h11" stroke="#222" strokeWidth="1.500" strokeDasharray="2 2" /></Icon>],
  ["Perspective", <Icon key="e"><path d="M3 8l5-5h17l-6 6z" fill="#555" /><path d="M3 8h11v7H3z" fill="#111" /><path d="M14 8L25 4v8L14 22z" fill="#000" /></Icon>],
  ["Render mode", <Icon key="f"><circle cx="12.500" cy="12.500" r="10" fill="url(#goldBall)" /><path d="M13 3a10 10 0 010 19.500z" fill="#f0d890" /><path d="M14 8h8M14 13h9M14 18h7M17 4v17M20 6v13" stroke="#a07818" strokeWidth=".7" /></Icon>],
  ["Show icons", <Icon key="g"><path d="M11 14V4M11 14l11-2M11 14l-8 4" stroke="#1c88d8" strokeWidth="2" /><path d="M11 0l3.500 5h-7zM26 11l-6-2 1 6zM1 19l3-5 3 5z" fill="#1c88d8" /><path d="M13 16h9v7h-9z" fill="#3a78b8" stroke="#444" /></Icon>],
  ["Information", <Icon key="h"><circle cx="12.500" cy="12.500" r="10" fill="#fff" stroke="#2c8cdc" strokeWidth="1.500" /><path d="M12.500 11v8" stroke="#2c8cdc" strokeWidth="3" /><circle cx="12.500" cy="7" r="1.800" fill="#2c8cdc" /><path d="M20 12l4 4-4 4z" fill="#000" /></Icon>],
  ["Stop", <Icon key="i"><path d="M9 2h8l6 6v8l-6 6H9l-6-6V8z" fill="#fff" stroke="#d84040" strokeWidth="1.500" /><path d="M10 5h6l4 4v6l-4 4h-6l-4-4V9z" fill="#e83030" /></Icon>],
];

function StatusBar() {
  return (
    <footer className="flex h-[31px] shrink-0 items-center bg-[#e8f0fa] pr-[1px] pb-[2px] pl-[4px]">
      <svg width="20" height="22" viewBox="0 0 20 22" fill="none" stroke="#f00000" aria-label="Ready" role="img">
        <path d="M1 3c5-1 8 1 11 5l4 6M7 4c4-3 8-2 10 2" strokeWidth="1.500" />
        <path d="M14 5c2 4-4 9-10 14" strokeWidth="2.500" />
        <path d="M14 13l3 3" strokeWidth="2.500" />
      </svg>
      <div className="ml-auto flex">
        {statusIcons.map(([label, icon]) => (
          <button key={label} type="button" aria-label={label}>{icon}</button>
        ))}
      </div>
    </footer>
  );
}

export default function App() {
  return (
    <div className="flex h-screen flex-col overflow-hidden border border-[#c85a64] font-['Liberation_Sans',Arial,sans-serif] text-[13px] leading-[18px]">
      <Gradients />
      <TitleBar />
      <Toolbar />
      <TabBar />
      <Ribbon />
      <div className="flex min-h-0 flex-1">
        <Sidebar />
        <Viewport />
      </div>
      <StatusBar />
    </div>
  );
}
